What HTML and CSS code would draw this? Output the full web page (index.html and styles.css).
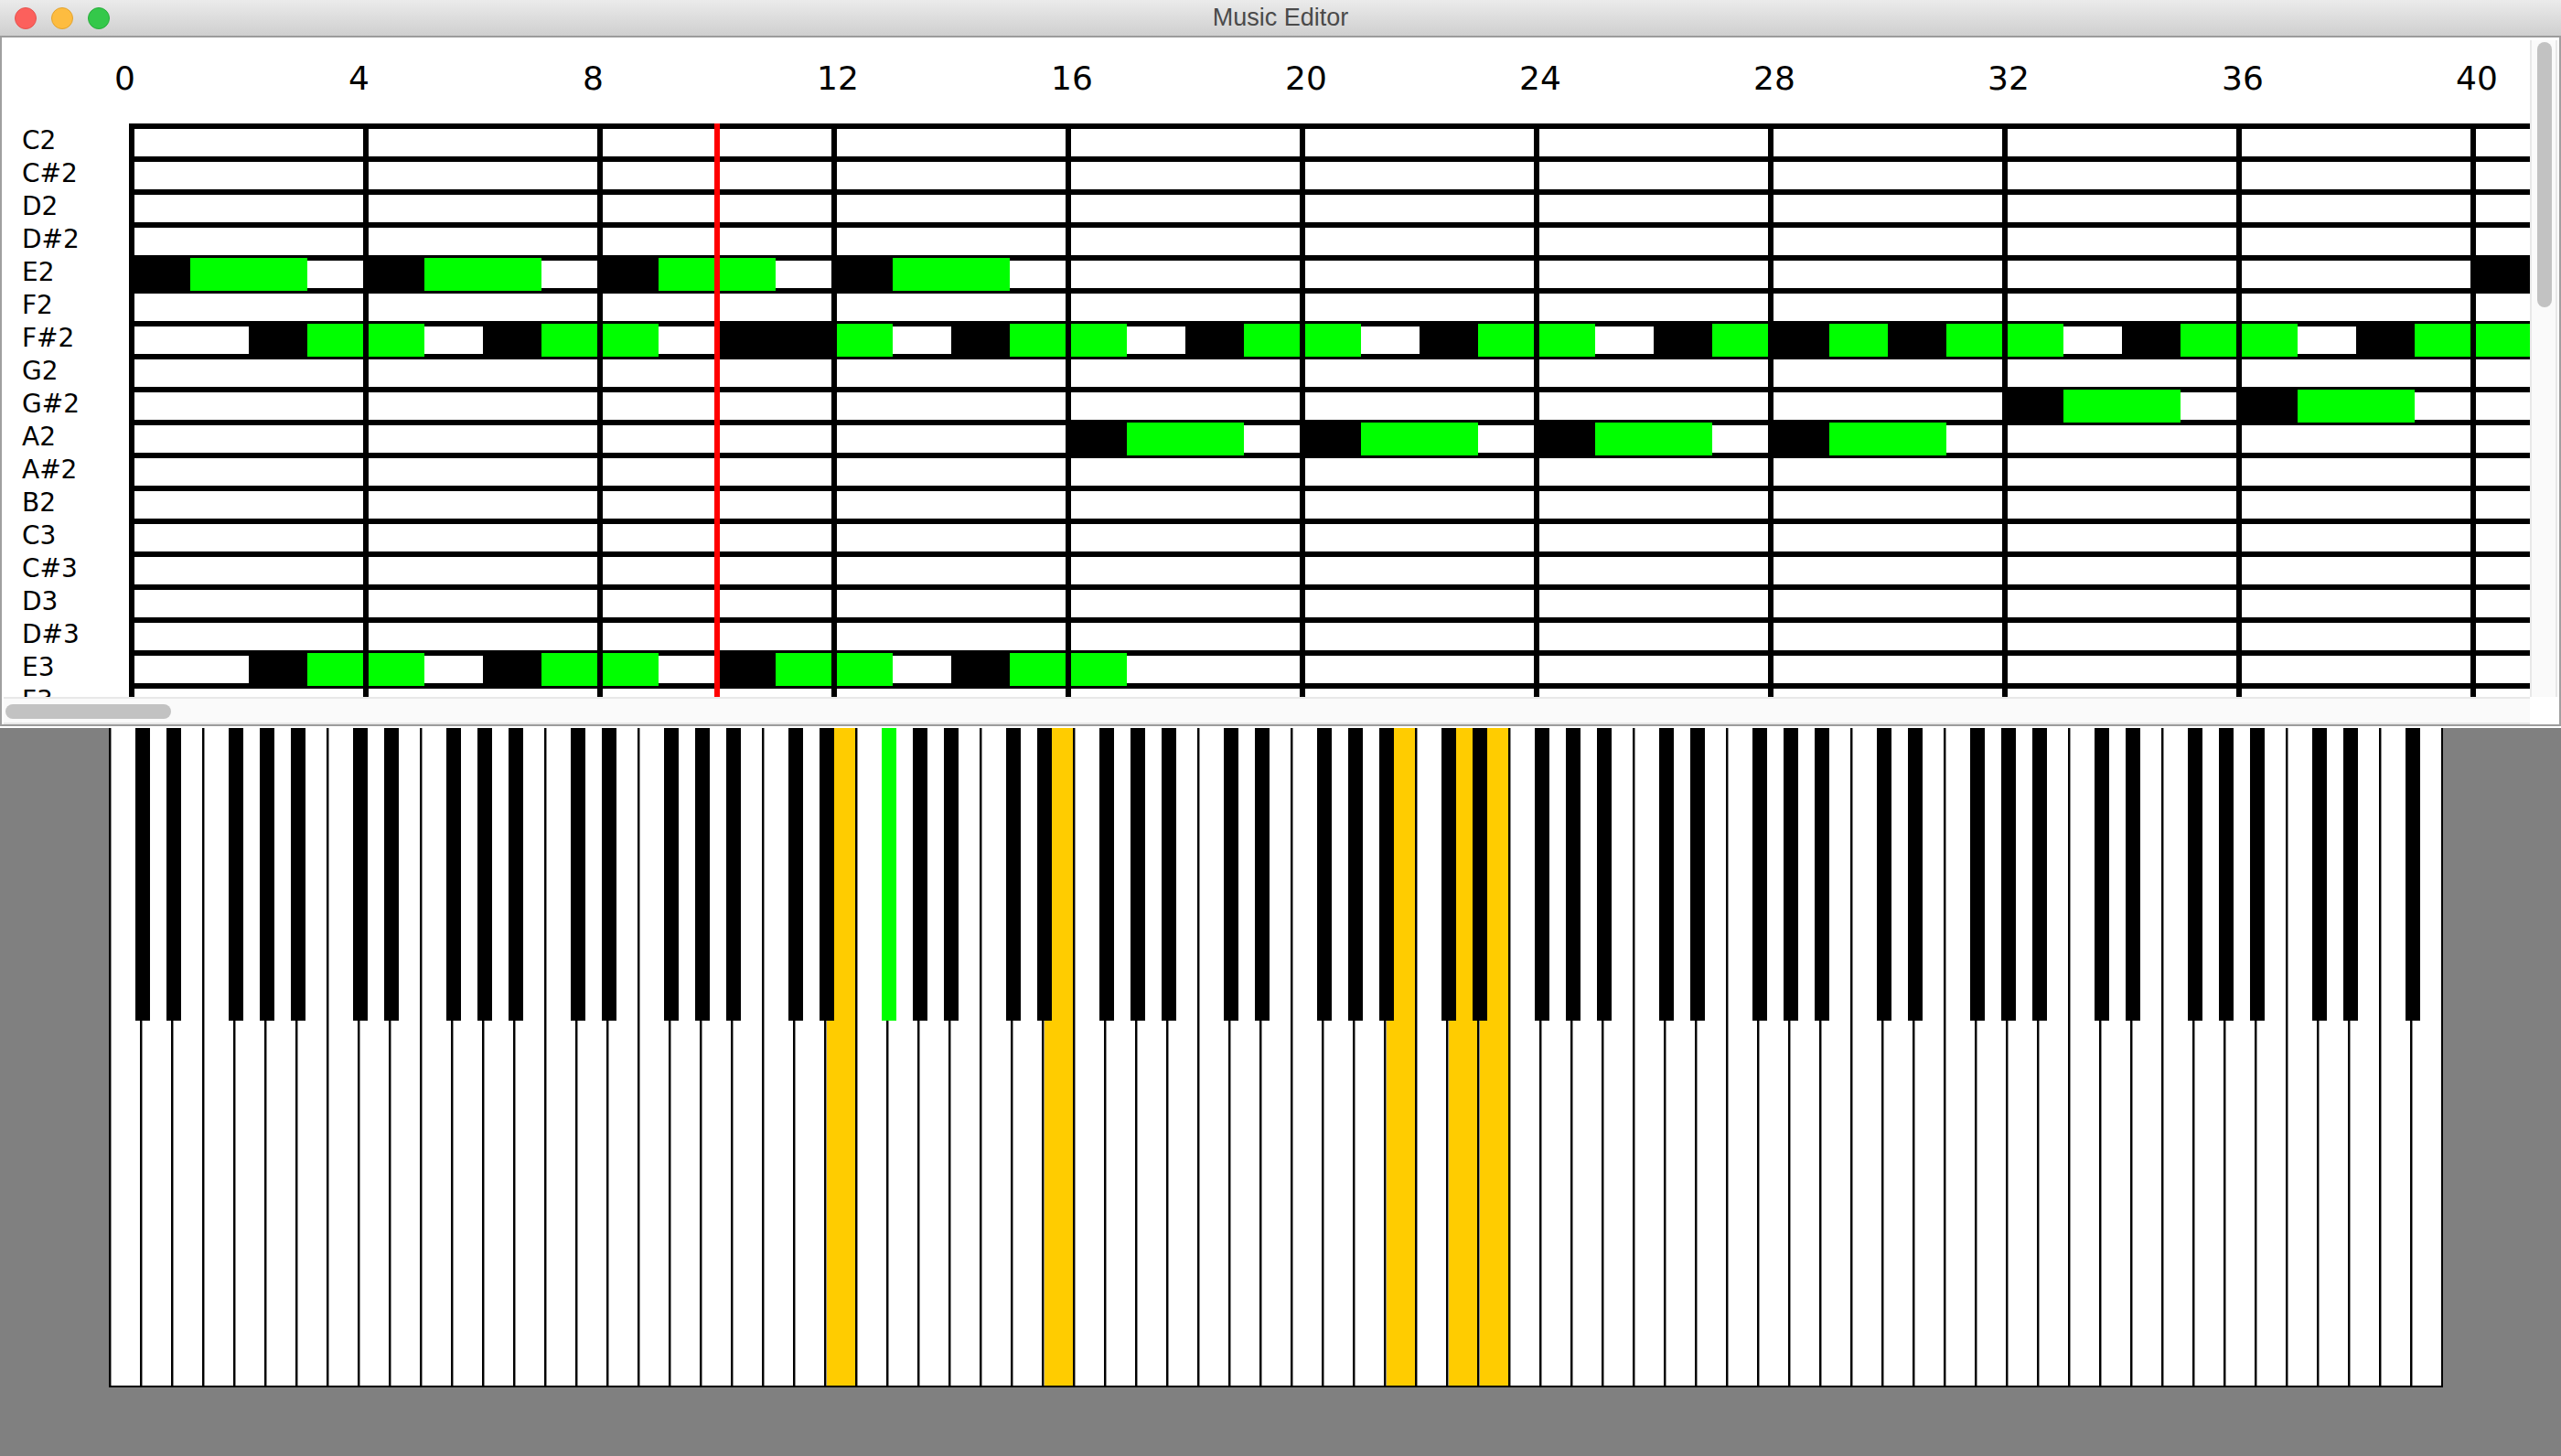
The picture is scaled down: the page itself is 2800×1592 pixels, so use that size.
FILE: index.html
```html
<!DOCTYPE html>
<html>
<head>
  <title>Music Editor</title>
  <link rel="stylesheet" href="styles.css">
</head>
<body>
  <div class="titlebar">
    <div class="lights">
      <span class="light light-close"></span>
      <span class="light light-min"></span>
      <span class="light light-max"></span>
    </div>
    <div class="title">Music Editor</div>
  </div>

  <div class="editor">
    <div class="editor-top">
      <div class="roll-view">
        <div class="beats">
          <span class="beat">0</span>
          <span class="beat">4</span>
          <span class="beat">8</span>
          <span class="beat">12</span>
          <span class="beat">16</span>
          <span class="beat">20</span>
          <span class="beat">24</span>
          <span class="beat">28</span>
          <span class="beat">32</span>
          <span class="beat">36</span>
          <span class="beat">40</span>
        </div>
        <div class="roll-body">
          <div class="names">
            <div class="name">C2</div>
            <div class="name">C#2</div>
            <div class="name">D2</div>
            <div class="name">D#2</div>
            <div class="name">E2</div>
            <div class="name">F2</div>
            <div class="name">F#2</div>
            <div class="name">G2</div>
            <div class="name">G#2</div>
            <div class="name">A2</div>
            <div class="name">A#2</div>
            <div class="name">B2</div>
            <div class="name">C3</div>
            <div class="name">C#3</div>
            <div class="name">D3</div>
            <div class="name">D#3</div>
            <div class="name">E3</div>
            <div class="name">F3</div>
          </div>
          <div class="grid" id="grid">
            <div class="bar-lines"></div>
            <div class="playhead"></div>
          </div>
        </div>
      </div>
      <div class="vscroll"><div class="vthumb"></div></div>
    </div>
    <div class="hscroll"><div class="hthumb"></div></div>
  </div>

  <div class="keyboard-area">
    <div class="keyboard" id="keyboard"></div>
  </div>

  <script src="script.js"></script>
</body>
</html>
```

FILE: styles.css
```css
html, body {
  margin: 0;
  height: 100%;
}

body {
  width: 2800px;
  height: 1592px;
  display: flex;
  flex-direction: column;
  background-color: #808080;
  overflow: hidden;
}

.titlebar {
  flex: 0 0 39px;
  display: grid;
  grid-template-columns: 1fr auto 1fr;
  align-items: center;
  background: linear-gradient(to bottom, #ebebeb, #cfcfcf);
  border-bottom: 2px solid #9c9c9c;
}

.lights {
  display: flex;
  gap: 16px;
  padding-left: 16px;
}

.light {
  width: 24px;
  height: 24px;
  border-radius: 50%;
  box-sizing: border-box;
  border: 1px solid;
}

.light-close {
  background-color: #fc605c;
  border-color: #e5534f;
}

.light-min {
  background-color: #fdbc40;
  border-color: #e2a32f;
}

.light-max {
  background-color: #34c84a;
  border-color: #28ad3b;
}

.title {
  font-family: "Liberation Sans", Arial, sans-serif;
  font-size: 27px;
  color: #4a4a4a;
}

.editor {
  flex: 0 0 753px;
  min-height: 0;
  box-sizing: border-box;
  display: flex;
  flex-direction: column;
  background-color: #ffffff;
  border-left: 2px solid #a0a0a0;
  border-right: 2px solid #a0a0a0;
  border-bottom: 2px solid #9c9c9c;
}

.editor-top {
  flex: 0 0 721px;
  min-height: 0;
  display: flex;
}

.roll-view {
  flex: 1;
  min-width: 0;
  overflow: hidden;
  font-family: "DejaVu Sans", sans-serif;
  color: #000000;
}

.beats {
  display: flex;
  height: 94px;
  box-sizing: border-box;
  padding: 25px 0 0 123px;
  font-size: 36px;
  line-height: 40px;
}

.beat {
  flex: 0 0 256px;
}

.roll-body {
  display: flex;
}

.names {
  flex: 0 0 139px;
  box-sizing: border-box;
  padding: 1px 0 0 22px;
  font-size: 28px;
  line-height: 36px;
}

.grid {
  position: relative;
  flex: 0 0 auto;
  display: grid;
  grid-template-columns: repeat(42, 64px);
  grid-template-rows: repeat(18, 36px);
  padding: 3px 0 3px 3px;
  background: repeating-linear-gradient(to bottom, #000000 0, #000000 6px, #ffffff 6px, #ffffff 36px);
}

.note-head {
  background-color: #000000;
}

.note-body {
  background-color: #00ff00;
}

.bar-lines {
  position: absolute;
  top: 0;
  bottom: 0;
  left: 0;
  right: 0;
  background: repeating-linear-gradient(to right, #000000 0, #000000 6px, transparent 6px, transparent 256px);
}

.playhead {
  position: absolute;
  top: 0;
  bottom: 0;
  left: 640px;
  width: 6px;
  background-color: #ff0000;
}

.vscroll {
  flex: 0 0 20px;
  margin: 3px 2px 0 0;
  padding: 2px 0 0 6px;
  background-color: #fafafa;
  border-left: 2px solid #e8e8e8;
  border-right: 2px solid #e8e8e8;
}

.vthumb {
  width: 16px;
  height: 290px;
  border-radius: 8px;
  background-color: #c2c2c2;
}

.hscroll {
  flex: 0 0 30px;
  box-sizing: border-box;
  width: 2762px;
  margin-left: 2px;
  padding: 6px 0 0 2px;
  background-color: #fafafa;
  border-top: 2px solid #e8e8e8;
  border-bottom: 2px solid #e8e8e8;
}

.hthumb {
  width: 181px;
  height: 16px;
  border-radius: 8px;
  background-color: #c2c2c2;
}

.keyboard-area {
  flex: 1;
  border-top: 2px solid #ffffff;
  padding-left: 119px;
}

.keyboard {
  display: flex;
}

.white-key {
  position: relative;
  flex: 0 0 34px;
  height: 721px;
  box-sizing: border-box;
  background-color: #ffffff;
  border-left: 2px solid #000000;
  border-bottom: 2px solid #000000;
  box-shadow: inset 1px 0 0 #8a8a8a;
}

.white-key:last-child {
  flex-basis: 36px;
  border-right: 2px solid #000000;
}

.white-key.pressed {
  background-color: #ffcc00;
}

.black-key {
  position: absolute;
  top: 0;
  left: 27px;
  width: 16px;
  height: 320px;
  z-index: 1;
  background-color: #000000;
}

.black-key.active {
  background-color: #00ff00;
}
```

FILE: script.js
```js
// Notes as [row, start beat, head length, body length]
var notes = [
  [4, 0, 1, 2], [4, 4, 1, 2], [4, 8, 1, 2], [4, 12, 1, 2], [4, 40, 1, 0],
  [6, 2, 1, 2], [6, 6, 1, 2], [6, 10, 2, 1], [6, 14, 1, 2], [6, 18, 1, 2],
  [6, 22, 1, 2], [6, 26, 1, 1], [6, 28, 1, 1], [6, 30, 1, 2], [6, 34, 1, 2],
  [6, 38, 1, 2],
  [8, 32, 1, 2], [8, 36, 1, 2],
  [9, 16, 1, 2], [9, 20, 1, 2], [9, 24, 1, 2], [9, 28, 1, 2],
  [16, 2, 1, 2], [16, 6, 1, 2], [16, 10, 1, 2], [16, 14, 1, 2]
];

var grid = document.getElementById('grid');
var barLines = grid.querySelector('.bar-lines');

function addCell(className, row, beat, length) {
  var cell = document.createElement('div');
  cell.className = className;
  cell.style.gridRow = row + 1;
  cell.style.gridColumn = (beat + 1) + ' / span ' + length;
  grid.insertBefore(cell, barLines);
}

for (var i = 0; i < notes.length; i++) {
  var note = notes[i];
  addCell('note-head', note[0], note[1], note[2]);
  if (note[3] > 0) {
    addCell('note-body', note[0], note[1] + note[2], note[3]);
  }
}

// Keyboard: 75 white keys from C, a black key after C D F G A of each octave
var keyboard = document.getElementById('keyboard');
var pressedKeys = [23, 30, 41, 43, 44];
var activeBlackKey = 24;
var hasBlack = [true, true, false, true, true, true, false];

for (var k = 0; k < 75; k++) {
  var key = document.createElement('div');
  key.className = 'white-key';
  if (pressedKeys.indexOf(k) !== -1) {
    key.className += ' pressed';
  }
  if (hasBlack[k % 7] && k < 74) {
    var black = document.createElement('div');
    black.className = 'black-key';
    if (k === activeBlackKey) {
      black.className += ' active';
    }
    key.appendChild(black);
  }
  keyboard.appendChild(key);
}
```
